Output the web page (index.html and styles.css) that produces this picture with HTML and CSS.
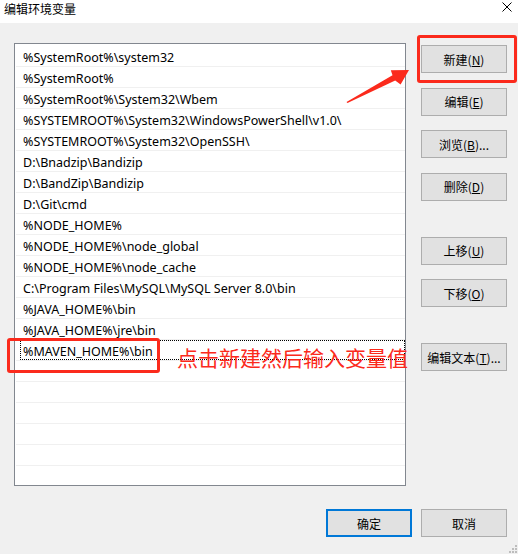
FILE: index.html
```html
<!DOCTYPE html>
<html lang="zh">
<head>
<meta charset="utf-8">
<title>编辑环境变量</title>
<link rel="stylesheet" href="styles.css">
</head>
<body>
<div class="window">
  <div class="titlebar">
    <span class="title">编辑环境变量</span>
    <svg class="close" width="10" height="10" viewBox="0 0 10 10"><path d="M0.5 0.5 L9.5 9.5 M9.5 0.5 L0.5 9.5" stroke="#000" stroke-width="1" fill="none"/></svg>
  </div>
  <div class="body">
    <div class="main">
      <div class="list">
        <div class="row">%SystemRoot%\system32</div>
        <div class="row">%SystemRoot%</div>
        <div class="row">%SystemRoot%\System32\Wbem</div>
        <div class="row">%SYSTEMROOT%\System32\WindowsPowerShell\v1.0\</div>
        <div class="row">%SYSTEMROOT%\System32\OpenSSH\</div>
        <div class="row">D:\Bnadzip\Bandizip</div>
        <div class="row">D:\BandZip\Bandizip</div>
        <div class="row">D:\Git\cmd</div>
        <div class="row">%NODE_HOME%</div>
        <div class="row">%NODE_HOME%\node_global</div>
        <div class="row">%NODE_HOME%\node_cache</div>
        <div class="row">C:\Program Files\MySQL\MySQL Server 8.0\bin</div>
        <div class="row">%JAVA_HOME%\bin</div>
        <div class="row">%JAVA_HOME%\jre\bin</div>
        <div class="row row-selected"><span class="focus">%MAVEN_HOME%\bin</span></div>
        <div class="row"></div>
        <div class="row"></div>
        <div class="row"></div>
        <div class="row"></div>
        <div class="row"></div>
      </div>
      <div class="buttons">
        <div class="group">
          <button class="btn">新建(<u>N</u>)</button>
          <button class="btn">编辑(<u>E</u>)</button>
          <button class="btn">浏览(<u>B</u>)...</button>
          <button class="btn">删除(<u>D</u>)</button>
        </div>
        <div class="group">
          <button class="btn">上移(<u>U</u>)</button>
          <button class="btn">下移(<u>O</u>)</button>
        </div>
        <div class="group">
          <button class="btn">编辑文本(<u>T</u>)...</button>
        </div>
      </div>
    </div>
    <div class="footer">
      <button class="btn btn-default">确定</button>
      <button class="btn">取消</button>
    </div>
  </div>

  <div class="mark mark-new"></div>
  <div class="mark mark-row"></div>
  <div class="note">点击新建然后输入变量值</div>
  <svg class="arrow" width="518" height="554" viewBox="0 0 518 554">
    <polygon points="346.5,102 392.5,75.2 390.8,70.3 409,70 400.6,84.6 395.2,80.4 347.5,103" fill="#fb2a1c"/>
  </svg>
  <svg class="grip" width="12" height="12" viewBox="0 0 12 12">
    <rect x="9" y="3" width="2" height="2" fill="#bdbdbd"/>
    <rect x="6" y="6" width="2" height="2" fill="#bdbdbd"/>
    <rect x="9" y="6" width="2" height="2" fill="#bdbdbd"/>
    <rect x="3" y="9" width="2" height="2" fill="#bdbdbd"/>
    <rect x="6" y="9" width="2" height="2" fill="#bdbdbd"/>
    <rect x="9" y="9" width="2" height="2" fill="#bdbdbd"/>
  </svg>
</div>
</body>
</html>
```

FILE: styles.css
```css
html, body {
  margin: 0;
  padding: 0;
}

.window {
  position: relative;
  width: 518px;
  height: 554px;
  display: flex;
  flex-direction: column;
  font-family: "Noto Sans", "Noto Sans CJK SC", sans-serif;
  font-size: 12px;
  color: #000;
  overflow: hidden;
}

.titlebar {
  height: 23px;
  flex: 0 0 23px;
  background: #fff;
  display: flex;
  align-items: flex-start;
  justify-content: space-between;
  padding: 0 6px 0 4px;
  box-sizing: border-box;
}

.title {
  font-family: "Noto Sans CJK SC", sans-serif;
  font-size: 12px;
  line-height: 16px;
  padding-top: 1px;
}

.close {
  margin-top: 2px;
}

.body {
  flex: 1;
  background: #f0f0f0;
  padding: 20px 11px 0 14px;
}

.main {
  display: flex;
  gap: 15px;
}

.list {
  width: 392px;
  height: 443px;
  box-sizing: border-box;
  border: 1px solid #82878f;
  background: #fff;
  padding: 2px 0 0 1px;
  overflow: hidden;
  font-size: 12.5px;
}

.row {
  height: 21px;
  box-sizing: border-box;
  border-bottom: 1px solid #f0f0f0;
  padding: 1px 0 0 7px;
  line-height: 21px;
  white-space: nowrap;
}

.row-selected {
  padding: 0 0 0 4px;
}

.focus {
  display: block;
  height: 20px;
  box-sizing: border-box;
  border: 1px dotted #000;
  padding-left: 2px;
  line-height: 21px;
}

.buttons {
  width: 86px;
  display: flex;
  flex-direction: column;
  gap: 36px;
  padding-top: 2px;
}

.group {
  display: flex;
  flex-direction: column;
  gap: 14.5px;
}

.btn {
  width: 86px;
  height: 28px;
  box-sizing: border-box;
  border: 1px solid #adadad;
  background: #e1e1e1;
  font-family: "Noto Sans CJK SC", sans-serif;
  font-size: 12px;
  color: #000;
  padding: 0;
  margin: 0;
  display: flex;
  align-items: center;
  justify-content: center;
}

.btn-default {
  border: 2px solid #0078d7;
}

.footer {
  display: flex;
  justify-content: flex-end;
  gap: 9px;
  margin-top: 23px;
}

.mark {
  position: absolute;
  box-sizing: border-box;
  border: 3px solid #fb2a1c;
  border-radius: 3px;
}

.mark-new {
  left: 417px;
  top: 35px;
  width: 100px;
  height: 48px;
}

.mark-row {
  left: 7px;
  top: 338px;
  width: 153px;
  height: 35px;
}

.note {
  position: absolute;
  left: 177px;
  top: 345px;
  font-family: "Noto Sans CJK SC", sans-serif;
  font-size: 21px;
  line-height: 25px;
  color: #fb2a1c;
  white-space: nowrap;
}

.arrow {
  position: absolute;
  left: 0;
  top: 0;
  pointer-events: none;
}

.grip {
  position: absolute;
  right: 0;
  bottom: 0;
}
```
